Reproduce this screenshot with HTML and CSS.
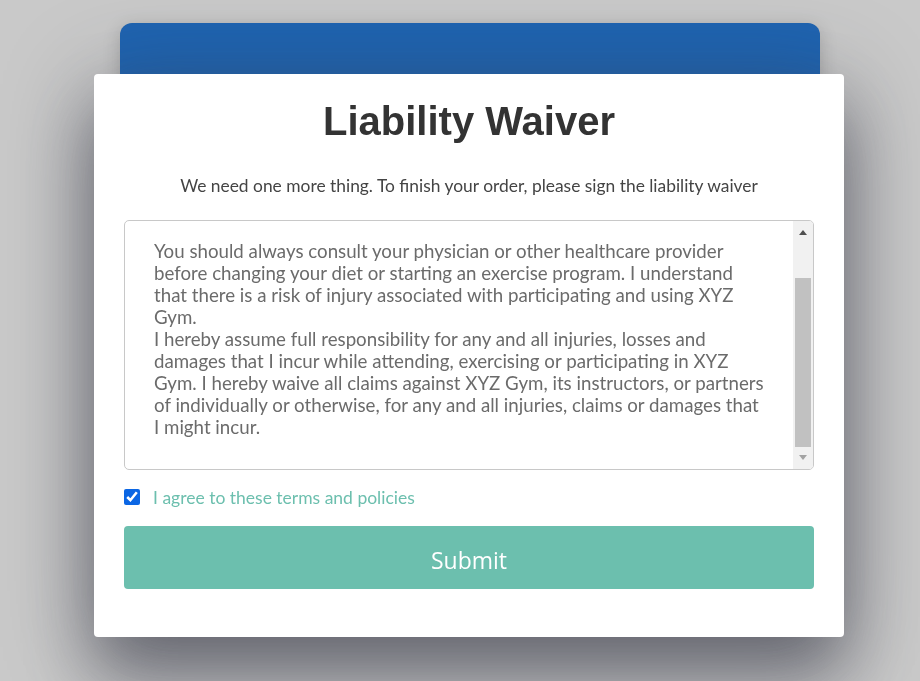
FILE: index.html
```html
<!DOCTYPE html>
<html>
<head>
<meta charset="utf-8">
<link rel="stylesheet" href="styles.css">
</head>
<body>
<div class="stage">
  <div class="back-card"></div>
</div>
<div class="modal">
  <h1 class="title">Liability Waiver</h1>
  <p class="subtitle">We need one more thing. To finish your order, please sign the liability waiver</p>
  <div class="waiver">
    <div class="waiver-text">You should always consult your physician or other healthcare provider before changing your diet or starting an exercise program. I understand that there is a risk of injury associated with participating and using XYZ Gym.<br>I hereby assume full responsibility for any and all injuries, losses and damages that I incur while attending, exercising or participating in XYZ Gym. I hereby waive all claims against XYZ Gym, its instructors, or partners of individually or otherwise, for any and all injuries, claims or damages that I might incur.</div>
    <div class="scrollbar">
      <span class="arrow up"></span>
      <span class="thumb"></span>
      <span class="arrow down"></span>
    </div>
  </div>
  <label class="agree">
    <input type="checkbox" checked>
    <span>I agree to these terms and policies</span>
  </label>
  <button class="submit">Submit</button>
</div>
</body>
</html>
```
FILE: styles.css
```css
html, body {
  margin: 0;
  padding: 0;
}
body {
  width: 920px;
  height: 681px;
  overflow: hidden;
  background: #c9c9c9;
  font-family: "Lato", "Noto Sans", sans-serif;
}
.stage {
  padding: 23px 0 0 120px;
}
.back-card {
  width: 700px;
  height: 420px;
  background: #1f64b1;
  border-radius: 12px;
  box-shadow: 0 4px 18px rgba(0, 0, 0, 0.18);
}
.modal {
  position: fixed;
  left: 94px;
  top: 74px;
  width: 750px;
  height: 563px;
  box-sizing: border-box;
  background: #fff;
  border-radius: 4px;
  padding: 22px 30px 0 30px;
  box-shadow: 0 40px 70px rgba(60, 62, 75, 0.6), 0 10px 90px rgba(60, 62, 75, 0.35);
  display: flex;
  flex-direction: column;
}
.title {
  margin: 0;
  font-family: "Liberation Sans", Arial, sans-serif;
  font-weight: bold;
  font-size: 40px;
  line-height: 50px;
  color: #333;
  text-align: center;
}
.subtitle {
  margin: 28px 0 0 0;
  font-size: 17.4px;
  line-height: 24px;
  color: #444;
  text-align: center;
}
.waiver {
  position: relative;
  margin-top: 22px;
  height: 250px;
  box-sizing: border-box;
  border: 1px solid #c8c8c8;
  border-radius: 5px;
  overflow: hidden;
}
.waiver-text {
  width: 611px;
  padding: 19px 0 0 29px;
  font-size: 18.7px;
  line-height: 22px;
  color: #6b6b6b;
}
.scrollbar {
  position: absolute;
  right: 0;
  top: 0;
  bottom: 0;
  width: 20px;
  background: #f1f1f1;
}
.thumb {
  position: absolute;
  left: 2px;
  right: 2px;
  top: 57px;
  height: 169px;
  background: #c1c1c1;
}
.arrow {
  position: absolute;
  left: 6px;
  width: 0;
  height: 0;
  border-left: 4px solid transparent;
  border-right: 4px solid transparent;
}
.arrow.up {
  top: 9px;
  border-bottom: 5px solid #505050;
}
.arrow.down {
  bottom: 9px;
  border-top: 5px solid #a3a3a3;
}
.agree {
  display: flex;
  align-items: center;
  margin-top: 17px;
  height: 20px;
  font-size: 17.5px;
  color: #6cbfae;
}
.agree input {
  margin: 0 13px 0 0;
  width: 16px;
  height: 16px;
  accent-color: #0b66e4;
}
.submit {
  margin-top: 19px;
  height: 63px;
  border: none;
  border-radius: 4px;
  background: #6cbfae;
  color: #fff;
  font-family: "Open Sans", sans-serif;
  font-size: 23px;
  padding: 4px 0 0 0;
}
```
